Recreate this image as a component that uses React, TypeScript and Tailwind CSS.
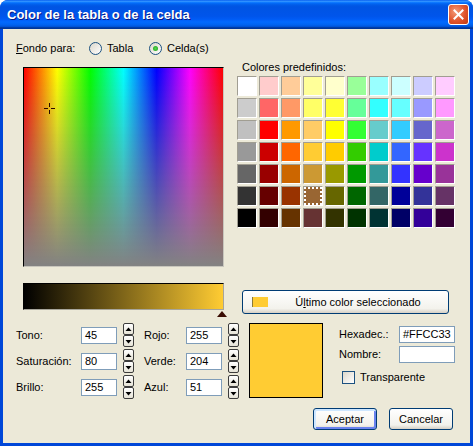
import React from 'react';

const swatches: string[][] = [
  ['#FFFFFF', '#FFCCCC', '#FFCC99', '#FFFF99', '#FFFFCC', '#99FF99', '#99FFFF', '#CCFFFF', '#CCCCFF', '#FFCCFF'],
  ['#CCCCCC', '#FF6666', '#FF9966', '#FFFF66', '#FFFF33', '#66FF99', '#33FFFF', '#66FFFF', '#9999FF', '#FF99FF'],
  ['#C0C0C0', '#FF0000', '#FF9900', '#FFCC66', '#FFFF00', '#33FF33', '#66CCCC', '#33CCFF', '#6666CC', '#CC66CC'],
  ['#999999', '#CC0000', '#FF6600', '#FFCC33', '#FFCC00', '#33CC00', '#00CCCC', '#3366FF', '#6633FF', '#CC33CC'],
  ['#666666', '#990000', '#CC6600', '#CC9933', '#999900', '#009900', '#339999', '#3333FF', '#6600CC', '#993399'],
  ['#333333', '#660000', '#993300', '#996633', '#666600', '#006600', '#336666', '#000099', '#333399', '#663366'],
  ['#000000', '#330000', '#663300', '#663333', '#333300', '#003300', '#003333', '#000066', '#330099', '#330033'],
];

const fieldRows = [
  { label: 'Tono:', value: '45', label2: 'Rojo:', value2: '255' },
  { label: 'Saturación:', value: '80', label2: 'Verde:', value2: '204' },
  { label: 'Brillo:', value: '255', label2: 'Azul:', value2: '51' },
];

function Radio({ checked }: { checked?: boolean }) {
  return (
    <span className="w-[13px] h-[13px] rounded-full border border-[#1c5180] bg-[linear-gradient(135deg,#dcd7cb,#ffffff)] flex items-center justify-center">
      {checked && <span className="w-[5px] h-[5px] rounded-full bg-[radial-gradient(circle,#55d84f,#1f9b1a)]" />}
    </span>
  );
}

function Spinner() {
  const half = 'w-[11px] h-[12px] rounded-[2px] border border-[#3c3c3c] bg-[linear-gradient(to_bottom,#ffffff,#e6e3d6)] flex items-center justify-center';
  return (
    <div className="flex flex-col">
      <div className={half}>
        <svg width="7" height="5" viewBox="0 0 7 5">
          <path d="M3.5 0.5 L6.5 4 L0.5 4 Z" fill="#000" />
        </svg>
      </div>
      <div className={half}>
        <svg width="7" height="5" viewBox="0 0 7 5">
          <path d="M0.5 1 L6.5 1 L3.5 4.5 Z" fill="#000" />
        </svg>
      </div>
    </div>
  );
}

function TextBox({ value, width }: { value?: string; width: string }) {
  return (
    <div className={`${width} h-[17px] border border-[#7f9db9] bg-white pl-[3px] flex items-center leading-none`}>
      {value}
    </div>
  );
}

export default function App() {
  return (
    <div className="w-[473px] h-[446px] [font-family:'Liberation_Sans',Arial,sans-serif] text-[11px] text-black">
      <div className="w-full h-full rounded-t-[8px] bg-[#0047d8] flex flex-col overflow-hidden">
        {/* title bar */}
        <div className="h-[29px] shrink-0 flex items-center justify-between pl-[7px] pr-[4px] bg-[linear-gradient(to_bottom,#0058ee_0%,#3593ff_4%,#288eff_6%,#127dff_8%,#036ffc_10%,#0262ee_14%,#0057e5_20%,#0054e3_24%,#0055eb_56%,#005bf5_66%,#026afe_76%,#0062ef_86%,#0052d6_92%,#0040ab_94%,#003092_100%)]">
          <span className="text-white font-bold text-[13px] [text-shadow:1px_1px_#0a1883]">
            Color de la tabla o de la celda
          </span>
          <div className="w-[21px] h-[21px] rounded-[3px] border border-white bg-[radial-gradient(circle_at_35%_35%,#f39b78,#e0542c_55%,#c23a10)] flex items-center justify-center">
            <svg width="11" height="11" viewBox="0 0 11 11">
              <path d="M1.5 1.5 L9.5 9.5 M9.5 1.5 L1.5 9.5" stroke="#fff" strokeWidth="2" strokeLinecap="square" />
            </svg>
          </div>
        </div>

        {/* body */}
        <div className="flex-1 mx-[3px] mb-[3px] bg-[#ece9d8] pl-[13px] pt-[12px] flex flex-col">
          {/* Fondo para */}
          <div className="h-[14px] flex items-center">
            <span className="w-[73px]">
              <u>F</u>ondo para:
            </span>
            <span className="w-[60px] flex items-center gap-[5px]">
              <Radio />
              <span>Tabla</span>
            </span>
            <span className="flex items-center gap-[5px]">
              <Radio checked />
              <span>Celda(s)</span>
            </span>
          </div>

          {/* picker + predefined */}
          <div className="mt-[6px] h-[256px] flex">
            <div className="ml-[7px] pt-[6px] w-[201px] flex flex-col">
              <div className="relative w-[201px] h-[201px] border-t border-l border-black border-r border-b border-r-[#c8c6bd] border-b-[#c8c6bd] bg-[linear-gradient(to_bottom,rgba(128,128,128,0),#828282),linear-gradient(to_right,#ff0000,#ffff00,#00ff00,#00ffff,#0000ff,#ff00ff,#ff0000)]">
                <svg className="absolute left-[20px] top-[35px]" width="11" height="11" viewBox="0 0 11 11">
                  <path d="M0 5.5 H4 M7 5.5 H11 M5.5 0 V4 M5.5 7 V11" stroke="#2a0800" strokeWidth="1" />
                </svg>
              </div>
              <div className="mt-[16px] w-[201px] h-[27px] border-t border-l border-black border-r border-b border-r-[#a7a59b] border-b-[#a7a59b] bg-[linear-gradient(to_right,#000000,#ffcc33)]" />
              <div className="flex justify-end pr-[-2px]">
                <svg className="mt-[1px] -mr-[3px]" width="10" height="6" viewBox="0 0 10 6">
                  <path d="M5 0 L10 6 L0 6 Z" fill="#3a0c02" />
                </svg>
              </div>
            </div>

            <div className="ml-[13px] flex flex-col">
              <div className="pl-[5px] h-[15px] leading-[13px]">Colores predefinidos:</div>
              <div className="grid grid-cols-10 gap-[2px] w-[218px]">
                {swatches.flatMap((row, r) =>
                  row.map((c, i) => (
                    <div
                      key={`${r}-${i}`}
                      className="w-[20px] h-[20px] border border-t-[#a19e92] border-l-[#a19e92] border-r-white border-b-white"
                      style={{ backgroundColor: c }}
                    >
                      {r === 5 && i === 3 && <div className="w-full h-full border-2 border-dotted border-white" />}
                    </div>
                  ))
                )}
              </div>
              <button className="mt-[62px] ml-[5px] w-[207px] h-[24px] rounded-[3px] border border-[#003c74] bg-[linear-gradient(to_bottom,#ffffff,#f3f2ec_80%,#d6d0c5)] flex items-center pl-[9px]">
                <span className="w-[16px] h-[10px] bg-[#ffcc33] border-l border-[#8a7a3a]" />
                <span className="flex-1 text-center">
                  Ú<u>l</u>timo color seleccionado
                </span>
              </button>
            </div>
          </div>

          {/* values */}
          <div className="mt-[6px] flex">
            <div className="flex flex-col gap-[2px]">
              {fieldRows.map((f) => (
                <div key={f.label} className="h-[24px] flex items-center">
                  <span className="w-[65px]">{f.label}</span>
                  <TextBox value={f.value} width="w-[36px]" />
                  <span className="ml-[6px]">
                    <Spinner />
                  </span>
                  <span className="ml-[10px] w-[42px]">{f.label2}</span>
                  <TextBox value={f.value2} width="w-[36px]" />
                  <span className="ml-[6px]">
                    <Spinner />
                  </span>
                </div>
              ))}
            </div>
            <div className="ml-[10px] w-[74px] h-[75px] border border-black bg-[#ffcc33]" />
            <div className="ml-[16px] flex flex-col">
              <div className="mt-[3px] h-[16px] flex items-center">
                <span className="w-[60px]">Hexadec.:</span>
                <TextBox value="#FFCC33" width="w-[56px]" />
              </div>
              <div className="mt-[4px] h-[16px] flex items-center">
                <span className="w-[60px]">Nombre:</span>
                <TextBox width="w-[56px]" />
              </div>
              <div className="mt-[9px] ml-[3px] h-[13px] flex items-center gap-[5px]">
                <span className="w-[13px] h-[13px] border border-[#1c5180] bg-[linear-gradient(135deg,#dcd7cb,#ffffff)]" />
                <span>Transparente</span>
              </div>
            </div>
          </div>

          {/* buttons */}
          <div className="mt-[9px] pr-[17px] flex justify-end gap-[12px]">
            <button className="w-[64px] h-[22px] rounded-[3px] border border-[#003c74] bg-[linear-gradient(to_bottom,#ffffff,#f3f2ec_80%,#d6d0c5)] shadow-[inset_1px_1px_0_1px_#cee7ff,inset_-1px_-1px_0_1px_#6982ee]">
              Aceptar
            </button>
            <button className="w-[64px] h-[22px] rounded-[3px] border border-[#003c74] bg-[linear-gradient(to_bottom,#ffffff,#f3f2ec_80%,#d6d0c5)]">
              Cancelar
            </button>
          </div>
        </div>
      </div>
    </div>
  );
}
